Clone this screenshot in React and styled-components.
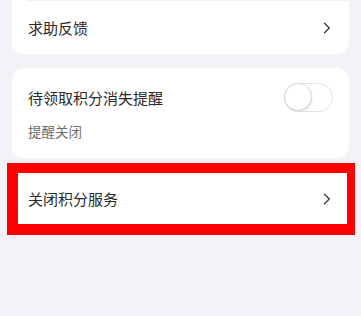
import React, { useState } from 'react';
import styled, { createGlobalStyle } from 'styled-components';

const GlobalStyle = createGlobalStyle`
  html, body {
    margin: 0;
    padding: 0;
    background: #f3f3f7;
    font-family: "Noto Sans CJK SC", "Noto Sans", sans-serif;
  }
`;

const Page = styled.div`
  width: 361px;
  height: 316px;
  background: #f3f3f7;
  overflow: hidden;
  display: flex;
  flex-direction: column;
`;

const Card = styled.div`
  margin: ${props => props.margin || '0 12px'};
  background: #fff;
  border-radius: ${props => props.radius || '12px'};
  overflow: hidden;
`;

const Row = styled.div`
  height: ${props => props.h || 54}px;
  padding: 0 16px;
  display: flex;
  align-items: center;
  justify-content: space-between;
  box-sizing: border-box;
  border-top: ${props => props.divider ? '1px solid #f1f1f3' : 'none'};
  margin-left: ${props => props.divider ? '16px' : '0'};
  padding-left: ${props => props.divider ? '0' : '16px'};
`;

const Title = styled.span`
  font-size: 15px;
  color: #2a2a2a;
  letter-spacing: 0;
`;

const Sub = styled.span`
  font-size: 13.5px;
  color: #6e6e6e;
`;

const SwitchBlock = styled.div`
  padding: 14px 16px 17px 16px;
  display: flex;
  flex-direction: column;
  gap: 9px;
`;

const SwitchLine = styled.div`
  display: flex;
  align-items: center;
  justify-content: space-between;
  height: 30px;
`;

const Track = styled.button`
  width: 49px;
  height: 29px;
  border-radius: 15px;
  border: 1.5px solid #e2e2e4;
  background: ${props => props.on ? '#0a59f7' : '#fff'};
  padding: 0;
  position: relative;
  cursor: pointer;
  box-sizing: border-box;
`;

const Knob = styled.span`
  position: absolute;
  top: 0;
  left: ${props => props.on ? '20px' : '0'};
  width: 26px;
  height: 26px;
  border-radius: 50%;
  background: #fff;
  box-shadow: 0 0 2px rgba(0, 0, 0, 0.3), 1px 1px 2px rgba(0, 0, 0, 0.12);
`;

const Highlight = styled.div`
  margin: 5px 6px 0 7px;
  border-style: solid;
  border-color: #ff0000;
  border-width: 10px 8px 11px 11px;
  background: #fff;
`;

function Chevron() {
  return (
    <svg width="8" height="12" viewBox="0 0 8 12" fill="none">
      <path d="M1.5 1.2L6.3 6L1.5 10.8" stroke="#3a3a3a" strokeWidth="1.3" strokeLinecap="round" strokeLinejoin="round" />
    </svg>
  );
}

export default function App() {
  let [on, setOn] = useState(false);

  return (
    <Page>
      <GlobalStyle />
      <Card radius="0 0 12px 12px">
        <Row divider h={54} style={{ paddingRight: 18 }}>
          <Title>求助反馈</Title>
          <Chevron />
        </Row>
      </Card>

      <Card margin="14px 12px 0 12px">
        <SwitchBlock>
          <SwitchLine>
            <Title>待领取积分消失提醒</Title>
            <Track on={on ? 1 : 0} onClick={() => setOn(!on)}>
              <Knob on={on ? 1 : 0} />
            </Track>
          </SwitchLine>
          <Sub>{on ? '提醒开启' : '提醒关闭'}</Sub>
        </SwitchBlock>
      </Card>

      <Highlight>
        <Row h={51} style={{ paddingLeft: 10, paddingRight: 16 }}>
          <Title>关闭积分服务</Title>
          <Chevron />
        </Row>
      </Highlight>
    </Page>
  );
}
